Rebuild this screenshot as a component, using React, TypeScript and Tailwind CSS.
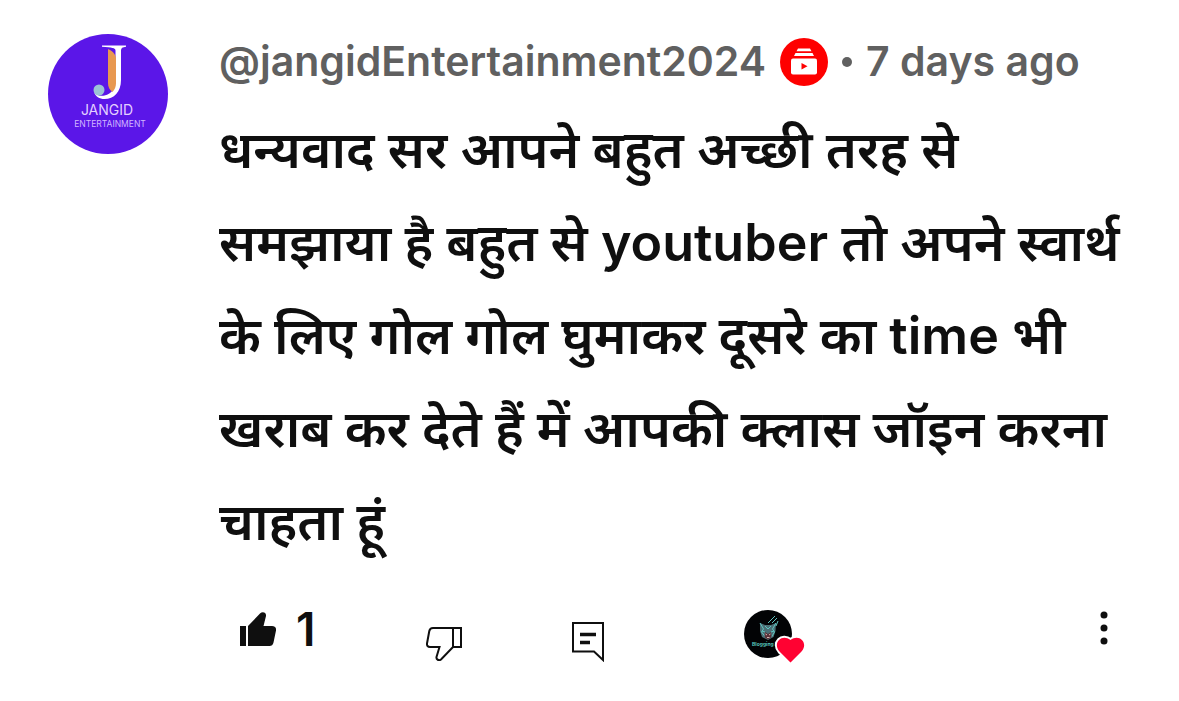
import type { ReactNode } from "react";

const commentLines = [
  "धन्यवाद सर आपने बहुत अच्छी तरह से",
  "समझाया है बहुत से youtuber तो अपने स्वार्थ",
  "के लिए गोल गोल घुमाकर दूसरे का time भी",
  "खराब कर देते हैं में आपकी क्लास जॉइन करना",
  "चाहता हूं",
];

function ChannelAvatar() {
  return (
    <a href="#channel" aria-label="Jangid Entertainment" className="shrink-0">
      <svg viewBox="0 0 120 120" className="block size-[120px]">
        <circle cx="60" cy="60" r="60" fill="#5b16e8" />
        <path d="M54 11.500h24v1.300c-3.500.500-5 1.200-5 3.700V46c0 12-7 19-16.500 19-5 0-9-2.500-10.500-7 3 3.500 7 4.500 10.500 3.500C64 60 67.500 54 67.500 46V16.500c0-2.500-3.500-3-13.500-3.700z" fill="#fff" />
        <path d="M60 15c5.500 2.500 8 6 8 10v24c0 4-1.200 6.500-3.500 9-3-2-4.500-5-4.500-9z" fill="#e8984f" />
        <circle cx="51" cy="56" r="5.500" fill="#9cc3d5" />
        <text x="59" y="81" textAnchor="middle" fontSize="14" fontFamily="Inter, sans-serif" fill="#e3cfff">JANGID</text>
        <text x="62" y="93" textAnchor="middle" fontSize="8.500" fontFamily="Inter, sans-serif" fill="#d0b5ff">ENTERTAINMENT</text>
      </svg>
    </a>
  );
}

function SubscriberBadge() {
  return (
    <svg viewBox="0 0 48 48" className="size-12 shrink-0" role="img" aria-label="Subscriber">
      <circle cx="24" cy="24" r="24" fill="#fe0000" />
      <path d="M18 10.500h12l1.500 2.800h-15zM15.500 15h17l1.500 3h-20z" fill="#fff" />
      <rect x="11" y="20.500" width="26" height="16" rx="2" fill="#fff" />
      <path d="M21.500 25v6.500l6-3.200z" fill="#fe0000" />
    </svg>
  );
}

function CreatorHeart() {
  return (
    <svg viewBox="0 0 62 54" className="block h-[54px] w-[62px]">
      <circle cx="24" cy="24" r="24" fill="#020305" />
      <path d="M16 13l5 2h6l5-2-.500 8-2 6-5.500 3-6-3-2-6z" fill="#4b6f76" />
      <path d="M16 13l3.500 6-2 3 4 5M32 13l-3.500 6 2 3-3 5M21 16l3 3 3-3M24 13l7-7M28 13l5-5M32 16l2-5M18 21l3 1M30 21l-3 1" fill="none" stroke="#5fc3bf" strokeWidth="1" />
      <path d="M21 22l3 2 3-2 .500 5-3.500 2.500-3.500-2.500z" fill="#5a3038" />
      <path d="M21.500 24l1.500 1M26.500 24l-1.500 1M23 27.500h2.500" stroke="#d7b8b2" strokeWidth="1" />
      <text x="8" y="35.500" fontSize="5" fontWeight="700" fontFamily="Inter, sans-serif" fill="#58c5bd">Blogging B</text>
      <path d="M46.500 52.500L35.500 41.500c-7.500-8.500 2.500-18.500 11-11.500 8.500-7 18.500 3 11 11.500z" fill="#ff0232" stroke="#fff" strokeWidth="4" strokeLinejoin="round" paintOrder="stroke" />
    </svg>
  );
}

function IconButton({ label, className, children }: { label: string; className: string; children: ReactNode }) {
  return (
    <button type="button" aria-label={label} className={className}>
      {children}
    </button>
  );
}

export default function App() {
  return (
    <main className="min-h-screen bg-white font-[Inter,'Noto_Sans','Noto_Sans_Devanagari',sans-serif] text-[#0f0f0f]">
      <article className="flex gap-[51px] py-[34px] pr-[34px] pl-12">
        <ChannelAvatar />
        <div className="min-w-0 flex-1">
          <header className="flex h-14 items-center text-[41px] font-semibold whitespace-nowrap text-[#606060]">
            <a href="#channel" className="mr-3.5">@jangidEntertainment2024</a>
            <SubscriberBadge />
            <span aria-hidden="true" className="mx-3.5 size-2.5 rounded-full bg-[#606060]" />
            <time>7 days ago</time>
          </header>

          <p className="mt-[13px] text-[52px] leading-[93px] font-semibold whitespace-nowrap">
            {commentLines.map((line) => (
              <span key={line} className="block">{line}</span>
            ))}
          </p>

          <footer className="flex items-start pt-[42px] pl-[21px]">
            <IconButton label="Like" className="flex items-center gap-5 pt-px text-[46px] leading-[36px] font-semibold">
              <svg viewBox="0 0 36 34" className="h-[34px] w-9" fill="#0f0f0f">
                <path d="M0 14h6v20H0zM8 14L20 1.500C22.500-1 26.500.500 26 4l-2.500 10H32c3 0 4.500 2 4 4.500l-2.500 12c-.500 2.500-2 3.500-4 3.500H8z" />
              </svg>
              <span>1</span>
            </IconButton>
            <IconButton label="Dislike" className="mt-[17px] ml-[111px]">
              <svg viewBox="0 0 36 34" className="block h-[34px] w-9" fill="none" stroke="#0f0f0f" strokeWidth="2">
                <path d="M27 1v19M27 1h8v19h-8L15 32.500c-2 1.500-5 0-4.500-2.500L13.500 20H4c-2.200 0-3.300-1.500-3-3.500L3.300 4C3.700 2 5 1 7 1h20" />
              </svg>
            </IconButton>
            <IconButton label="Reply" className="mt-3 ml-[110px]">
              <svg viewBox="0 0 32 40" className="block h-10 w-8" fill="none" stroke="#0f0f0f">
                <path d="M1 1h30v37L22 29.500H1z" strokeWidth="2" />
                <path d="M8 12.500h16M8 20.500h10" strokeWidth="3.500" />
              </svg>
            </IconButton>
            <IconButton label="Liked by creator" className="ml-[140px]">
              <CreatorHeart />
            </IconButton>
            <IconButton label="More actions" className="mt-px mr-[37px] ml-auto">
              <svg viewBox="0 0 8 34" className="block h-[34px] w-2" fill="#0f0f0f">
                <circle cx="4" cy="4" r="3.500" />
                <circle cx="4" cy="17" r="3.500" />
                <circle cx="4" cy="30" r="3.500" />
              </svg>
            </IconButton>
          </footer>
        </div>
      </article>
    </main>
  );
}
